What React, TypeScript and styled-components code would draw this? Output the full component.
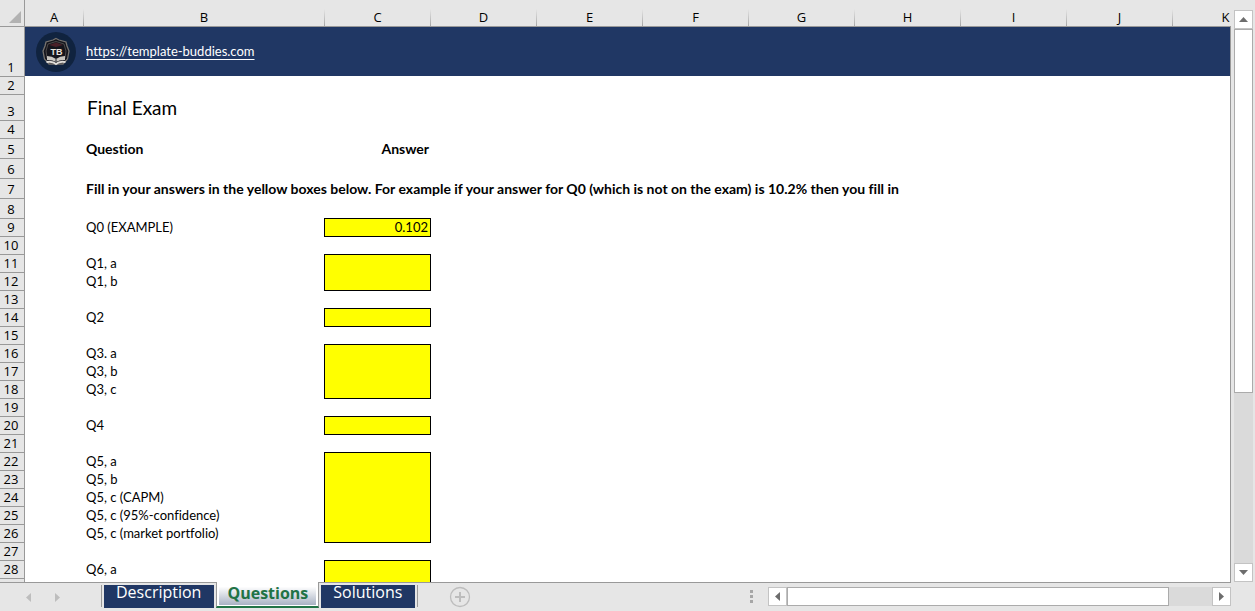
import React from "react";
import styled, { createGlobalStyle } from "styled-components";

const NAVY = "#203764";
const CHROME = "#e6e6e6";
const LINE = "#999999";
const UI_FONT = `"Open Sans", "Noto Sans", sans-serif`;
const CELL_FONT = `Lato, "Open Sans", sans-serif`;

const GlobalStyle = createGlobalStyle`
  * { box-sizing: border-box; }
  body { margin: 0; background: ${CHROME}; color: #000; font-family: ${UI_FONT}; }
  button { font: inherit; padding: 0; margin: 0; }
`;

const Workbook = styled.div`
  display: flex;
  flex-direction: column;
  height: 100vh;
  overflow: hidden;
`;

const SheetArea = styled.div`
  flex: 1;
  min-height: 0;
  display: flex;
`;

const SheetView = styled.main`
  flex: 1;
  min-width: 0;
  overflow: hidden;
  background: linear-gradient(${CHROME} 26px, #fff 26px);
`;

const SheetEdge = styled.div`
  width: 1px;
  margin-top: 26px;
  background: ${LINE};
`;

const Grid = styled.table`
  table-layout: fixed;
  width: 1279px;
  border-collapse: separate;
  border-spacing: 0;
  background: #fff;
`;

const Col = styled.col<{ $w: number }>`
  width: ${(p) => p.$w}px;
`;

const HeadRow = styled.tr`
  height: 27px;
`;

const Corner = styled.td`
  padding: 0 3px 3px 0;
  background: ${CHROME};
  border-bottom: 1px solid ${LINE};
  border-right: 1px solid ${LINE};
  text-align: right;
  vertical-align: bottom;
  line-height: 0;
`;

const ColHead = styled.th`
  padding: 8px 1px 0 0;
  background: linear-gradient(#e6e6e6, #a6a6a6) right bottom / 1px 17px no-repeat ${CHROME};
  border-bottom: 1px solid ${LINE};
  font-weight: 400;
  font-size: 13px;
  line-height: 18px;
`;

const Row = styled.tr<{ $h: number }>`
  height: ${(p) => p.$h}px;
`;

const RowHead = styled.th`
  padding: 0 2px 1px 0;
  background: ${CHROME};
  border-right: 1px solid ${LINE};
  border-bottom: 1px solid ${LINE};
  font-weight: 400;
  font-size: 13px;
  line-height: 16px;
  vertical-align: bottom;
`;

const Cell = styled.td<{ $bold?: boolean; $right?: boolean }>`
  padding: 0 2px ${(p) => (p.$bold ? 0 : 2)}px;
  font-family: ${CELL_FONT};
  font-variant-ligatures: none;
  font-size: ${(p) => (p.$bold ? 14 : 13)}px;
  line-height: ${(p) => (p.$bold ? 16 : 14)}px;
  font-weight: ${(p) => (p.$bold ? 700 : 400)};
  text-align: ${(p) => (p.$right ? "right" : "left")};
  white-space: nowrap;
  vertical-align: middle;
`;

const TitleCell = styled(Cell)`
  padding: 0 3px;
  font-size: 19px;
  line-height: 24px;
`;

const BannerCell = styled(Cell)`
  background: ${NAVY};
  border-bottom: 1px solid #fff;
`;

const AnswerCell = styled(Cell)<{ $last: boolean; $first: boolean }>`
  background: #ffff00;
  border-right: 1px solid #000;
  border-bottom: ${(p) => (p.$last ? "1px solid #000" : "0")};
  box-shadow: -1px 0 0 #000${(p) => (p.$first ? ", 0 -1px 0 #000, -1px -1px 0 #000" : "")};
`;

const LogoCell = styled(BannerCell)`
  padding: 0 0 0 11px;
  line-height: 0;
`;

const SiteLink = styled.a`
  color: #fff;
  text-decoration: underline;
  text-underline-offset: 3px;
`;

const VScroll = styled.div`
  display: flex;
  flex-direction: column;
  width: 24px;
  padding: 10px 2px 0 3px;
`;

const ScrollButton = styled.button`
  flex: none;
  display: flex;
  align-items: center;
  justify-content: center;
  width: 19px;
  height: 19px;
  background: #fff;
  border: 1px solid #c3c3c3;
`;

const Track = styled.div<{ $vertical?: boolean }>`
  flex: 1;
  display: flex;
  flex-direction: ${(p) => (p.$vertical ? "column" : "row")};
  background: #dadada;
`;

const Thumb = styled.div<{ $share: number }>`
  flex: ${(p) => p.$share};
  background: #fff;
  border: 1px solid #ababab;
`;

const Rest = styled.div<{ $share: number }>`
  flex: ${(p) => p.$share};
`;

const BottomBar = styled.footer`
  flex: none;
  display: flex;
  height: 29px;
`;

const TabStrip = styled.div`
  flex: 1;
  min-width: 0;
  display: flex;
  align-items: flex-start;
  border-top: 1px solid ${LINE};
`;

const NavButtons = styled.div`
  display: flex;
  gap: 16px;
  width: 101px;
  padding: 8px 0 0 22px;
`;

const PlainButton = styled.button`
  display: flex;
  align-items: center;
  justify-content: center;
  width: 13px;
  height: 12px;
  background: none;
  border: 0;
`;

const TabDivider = styled.div`
  width: 1px;
  height: 22px;
  margin: 2px 2px 0 0;
  background: ${LINE};
`;

const Tab = styled.button`
  height: 23px;
  margin: 2px 2px 0 0;
  padding: 0 13px 8px 12px;
  background: ${NAVY};
  border: 0;
  color: #fff;
  font-size: 16px;
  line-height: 15px;
`;

const ActiveTab = styled.button`
  height: 26px;
  margin: -1px 2px 0 0;
  padding: 0 2px 1px;
  background: #fff;
  border: solid ${LINE};
  border-width: 0 1px 2px;
  border-bottom-color: #217346;
  color: #217346;
  font-weight: 700;
  font-size: 16px;
  line-height: 16px;
`;

const TabShade = styled.span`
  display: block;
  height: 23px;
  padding: 3px 8px 0;
  background: linear-gradient(#fff 20%, #a9b2c4);
`;

const AddButton = styled(PlainButton)`
  width: 22px;
  height: 22px;
  margin: 3px 0 0 29px;
`;

const HScroll = styled.div`
  flex: 0 1 481px;
  display: flex;
  align-items: flex-start;
  padding-top: 4px;
  border-top: 1px solid ${LINE};
`;

const Grip = styled.div`
  display: flex;
  flex-direction: column;
  gap: 2px;
  width: 18px;
  padding-top: 3px;
`;

const GripDot = styled.span`
  width: 3px;
  height: 3px;
  background: #a6a6a6;
`;

const HTrack = styled(Track)`
  height: 19px;
`;

const BarCorner = styled.div`
  width: 24px;
`;

type ArrowDir = "up" | "down" | "left" | "right";
const arrowPaths: Record<ArrowDir, string> = {
  up: "M1 8L5.5 3L10 8Z",
  down: "M1 3L5.5 8L10 3Z",
  left: "M8 1L3 5.5L8 10Z",
  right: "M3 1L8 5.5L3 10Z",
};

const Arrow = ({ dir, color = "#6d6d6d" }: { dir: ArrowDir; color?: string }) => (
  <svg width="11" height="11" viewBox="0 0 11 11" aria-hidden="true">
    <path d={arrowPaths[dir]} fill={color} />
  </svg>
);

const Logo = () => (
  <svg width="40" height="40" viewBox="0 0 40 40" role="img" aria-label="Template Buddies">
    <circle cx="20" cy="20" r="20" fill="#10233f" />
    <path d="M20 6.500L23 8L30 10L31 14L33 19L31.500 27L27 32H13L8.500 27L7 19L9 14L10 10L17 8Z" fill="#15151c" stroke="#77736f" strokeWidth="1.3" />
    <path d="M20 9.500L28 12L30 19L29 26M20 9.500L12 12L10 19L11 26" fill="none" stroke="#4d4a4a" strokeWidth="1" />
    <path d="M13 13L20 10.500L27 13L20 15Z" fill="#4a2028" />
    <text x="20.500" y="22.500" textAnchor="middle" fontFamily="Liberation Sans, sans-serif" fontSize="9" fontWeight="700" fill="#e9e3dc">TB</text>
    <path d="M11 24Q16 24 20 27Q24 24 29 24V28Q24 27.500 20 30Q16 27.500 11 28Z" fill="#c9c6c0" />
    <path d="M10.500 30Q17 29 20 32Q23 29 29.500 30" fill="none" stroke="#e2dfda" strokeWidth="1.800" />
    <path d="M20 27V30" stroke="#20242e" strokeWidth="1" />
  </svg>
);

const columns = ["A", "B", "C", "D", "E", "F", "G", "H", "I", "J", "K"];
const widths = [25, 59, 241, 106, 106, 106, 106, 106, 106, 106, 106, 106];

interface AnswerRow {
  n: number;
  label?: string;
  box?: "single" | "first" | "mid" | "last";
  value?: string;
}

const answerRows: AnswerRow[] = [
  { n: 9, label: "Q0 (EXAMPLE)", box: "single", value: "0.102" },
  { n: 10 },
  { n: 11, label: "Q1, a", box: "first" },
  { n: 12, label: "Q1, b", box: "last" },
  { n: 13 },
  { n: 14, label: "Q2", box: "single" },
  { n: 15 },
  { n: 16, label: "Q3. a", box: "first" },
  { n: 17, label: "Q3, b", box: "mid" },
  { n: 18, label: "Q3, c", box: "last" },
  { n: 19 },
  { n: 20, label: "Q4", box: "single" },
  { n: 21 },
  { n: 22, label: "Q5, a", box: "first" },
  { n: 23, label: "Q5, b", box: "mid" },
  { n: 24, label: "Q5, c (CAPM)", box: "mid" },
  { n: 25, label: "Q5, c (95%-confidence)", box: "mid" },
  { n: 26, label: "Q5, c (market portfolio)", box: "last" },
  { n: 27 },
  { n: 28, label: "Q6, a", box: "first" },
];

const EmptyRow = ({ n, h }: { n: number; h: number }) => (
  <Row $h={h}>
    <RowHead scope="row">{n}</RowHead>
    <Cell colSpan={11} />
  </Row>
);

const Sheet = () => (
  <Grid>
    <colgroup>
      {widths.map((w, i) => (
        <Col key={i} $w={w} />
      ))}
    </colgroup>
    <thead>
      <HeadRow>
        <Corner>
          <svg width="12" height="12" viewBox="0 0 12 12" aria-hidden="true">
            <path d="M12 0V12H0Z" fill="#b2b2b2" />
          </svg>
        </Corner>
        {columns.map((c) => (
          <ColHead key={c} scope="col">{c}</ColHead>
        ))}
      </HeadRow>
    </thead>
    <tbody>
      <Row $h={50}>
        <RowHead scope="row">1</RowHead>
        <LogoCell><Logo /></LogoCell>
        <BannerCell colSpan={10}>
          <SiteLink href="https://template-buddies.com">https://template-buddies.com</SiteLink>
        </BannerCell>
      </Row>
      <EmptyRow n={2} h={18} />
      <Row $h={26}>
        <RowHead scope="row">3</RowHead>
        <Cell />
        <TitleCell colSpan={10}>Final Exam</TitleCell>
      </Row>
      <EmptyRow n={4} h={18} />
      <Row $h={20}>
        <RowHead scope="row">5</RowHead>
        <Cell />
        <Cell $bold>Question</Cell>
        <Cell $bold $right>Answer</Cell>
        <Cell colSpan={8} />
      </Row>
      <EmptyRow n={6} h={20} />
      <Row $h={20}>
        <RowHead scope="row">7</RowHead>
        <Cell />
        <Cell $bold colSpan={10}>
          Fill in your answers in the yellow boxes below. For example if your answer for Q0 (which is not on the exam) is 10.2% then you fill in
        </Cell>
      </Row>
      <EmptyRow n={8} h={20} />
      {answerRows.map(({ n, label, box, value }) =>
        box ? (
          <Row key={n} $h={18}>
            <RowHead scope="row">{n}</RowHead>
            <Cell />
            <Cell>{label}</Cell>
            <AnswerCell
              $right
              $first={box === "single" || box === "first"}
              $last={box === "single" || box === "last"}
            >
              {value}
            </AnswerCell>
            <Cell colSpan={8} />
          </Row>
        ) : (
          <EmptyRow key={n} n={n} h={18} />
        )
      )}
      <Row $h={18}>
        <RowHead />
        <Cell />
        <Cell />
        <AnswerCell $first={false} $last={false} />
        <Cell colSpan={8} />
      </Row>
    </tbody>
  </Grid>
);

export default function App() {
  return (
    <Workbook>
      <GlobalStyle />
      <SheetArea>
        <SheetView>
          <Sheet />
        </SheetView>
        <SheetEdge />
        <VScroll>
          <ScrollButton type="button" aria-label="Scroll up"><Arrow dir="up" /></ScrollButton>
          <Track $vertical>
            <Thumb $share={364} />
            <Rest $share={171} />
          </Track>
          <ScrollButton type="button" aria-label="Scroll down"><Arrow dir="down" /></ScrollButton>
        </VScroll>
      </SheetArea>
      <BottomBar>
        <TabStrip>
          <NavButtons>
            <PlainButton type="button" aria-label="Previous sheet"><Arrow dir="left" color="#bdbdbd" /></PlainButton>
            <PlainButton type="button" aria-label="Next sheet"><Arrow dir="right" color="#bdbdbd" /></PlainButton>
          </NavButtons>
          <TabDivider />
          <Tab type="button">Description</Tab>
          <ActiveTab type="button"><TabShade>Questions</TabShade></ActiveTab>
          <Tab type="button">Solutions</Tab>
          <TabDivider />
          <AddButton type="button" aria-label="New sheet">
            <svg width="22" height="22" viewBox="0 0 22 22" aria-hidden="true">
              <circle cx="11" cy="11" r="9.5" fill="none" stroke="#bdbdbd" strokeWidth="1.3" />
              <path d="M11 6V16M6 11H16" stroke="#bdbdbd" strokeWidth="2" />
            </svg>
          </AddButton>
        </TabStrip>
        <HScroll>
          <Grip><GripDot /><GripDot /><GripDot /></Grip>
          <ScrollButton type="button" aria-label="Scroll left"><Arrow dir="left" /></ScrollButton>
          <HTrack>
            <Thumb $share={382} />
            <Rest $share={43} />
          </HTrack>
          <ScrollButton type="button" aria-label="Scroll right"><Arrow dir="right" /></ScrollButton>
        </HScroll>
        <BarCorner />
      </BottomBar>
    </Workbook>
  );
}
